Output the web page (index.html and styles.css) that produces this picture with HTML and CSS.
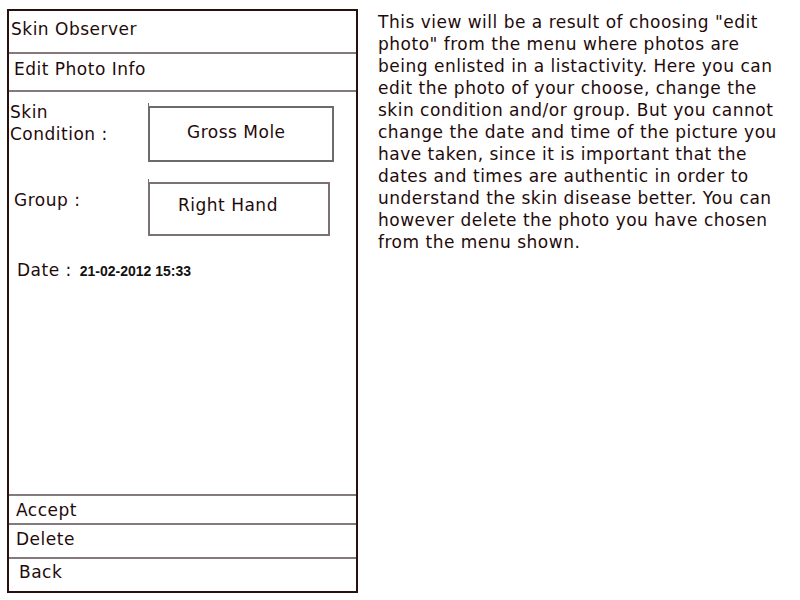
FILE: index.html
```html
<!DOCTYPE html>
<html>
<head>
<meta charset="utf-8">
<link rel="stylesheet" href="styles.css">
</head>
<body>
<div class="page">
  <div class="phone">
    <div class="title">Skin Observer</div>
    <div class="subtitle">Edit Photo Info</div>
    <div class="content">
      <div class="row row-cond">
        <div class="label label-cond">Skin<br>Condition :</div>
        <div class="box box-cond">Gross Mole</div>
      </div>
      <div class="row row-group">
        <div class="label label-group">Group :</div>
        <div class="box box-group">Right Hand</div>
      </div>
      <div class="row row-date">
        <span class="label label-date">Date :</span>
        <span class="date-value">21-02-2012 15:33</span>
      </div>
    </div>
    <div class="btn btn-accept">Accept</div>
    <div class="btn btn-delete">Delete</div>
    <div class="btn btn-back">Back</div>
  </div>
  <p class="desc">This view will be a result of choosing "edit photo" from the menu where photos are being enlisted in a listactivity. Here you can edit the photo of your choose, change the skin condition and/or group. But you cannot change the date and time of the picture you have taken, since it is important that the dates and times are authentic in order to understand the skin disease better. You can however delete the photo you have chosen from the menu shown.</p>
</div>
</body>
</html>
```

FILE: styles.css
```css
html, body {
  margin: 0;
  padding: 0;
  background: #ffffff;
}

body {
  font-family: "DejaVu Sans", sans-serif;
  color: #1f0b0b;
  font-size: 17px;
  letter-spacing: 0.5px;
}

.page {
  display: flex;
  align-items: flex-start;
  padding: 9px 0 0 7px;
}

.phone {
  width: 347px;
  height: 580px;
  border: 2px solid #2a0f0f;
  display: flex;
  flex-direction: column;
}

.title {
  height: 43px;
  box-sizing: border-box;
  padding: 7px 0 0 2px;
  line-height: 22px;
  border-bottom: 2px solid #857a7a;
}

.subtitle {
  height: 38px;
  box-sizing: border-box;
  padding: 4px 0 0 5px;
  line-height: 22px;
  border-bottom: 2px solid #857a7a;
}

.content {
  flex: 1;
  display: flex;
  flex-direction: column;
}

.row {
  display: flex;
  align-items: flex-start;
}

.label {
  line-height: 22px;
}

.row-cond {
  padding-top: 9px;
}

.label-cond {
  width: 138px;
  padding-left: 1px;
}

.box {
  position: relative;
  box-sizing: border-box;
  display: flex;
  align-items: center;
  line-height: 22px;
}

.box::before {
  content: "";
  position: absolute;
  left: -2px;
  top: -5px;
  width: 1px;
  height: 5px;
  background: #6e6a6a;
}

.box-cond {
  margin-top: 5px;
  width: 186px;
  height: 56px;
  border: 2px solid #6e6a6a;
  padding: 0 0 4px 37px;
}

.row-group {
  margin-top: 20px;
}

.label-group {
  width: 134px;
  padding-left: 5px;
  margin-top: 7px;
}

.box-group {
  width: 182px;
  height: 54px;
  border: 2px solid #7d7070;
  padding: 0 0 9px 28px;
}

.box-group::before {
  background: #7d7070;
}

.row-date {
  margin-top: 23px;
  padding-left: 8px;
  align-items: baseline;
}

.label-date {
  line-height: 22px;
}

.date-value {
  font-family: "Liberation Sans", Arial, sans-serif;
  font-weight: bold;
  font-size: 14px;
  letter-spacing: 0;
  margin-left: 8px;
  color: #111111;
}

.btn {
  box-sizing: border-box;
  line-height: 22px;
  border-top: 2px solid #857a7a;
}

.btn-accept {
  height: 29px;
  padding: 3px 0 0 7px;
}

.btn-delete {
  height: 34px;
  padding: 3px 0 0 7px;
}

.btn-back {
  height: 34px;
  padding: 2px 0 0 10px;
}

.desc {
  margin: 2px 0 0 20px;
  width: 400px;
  line-height: 22px;
}
```
